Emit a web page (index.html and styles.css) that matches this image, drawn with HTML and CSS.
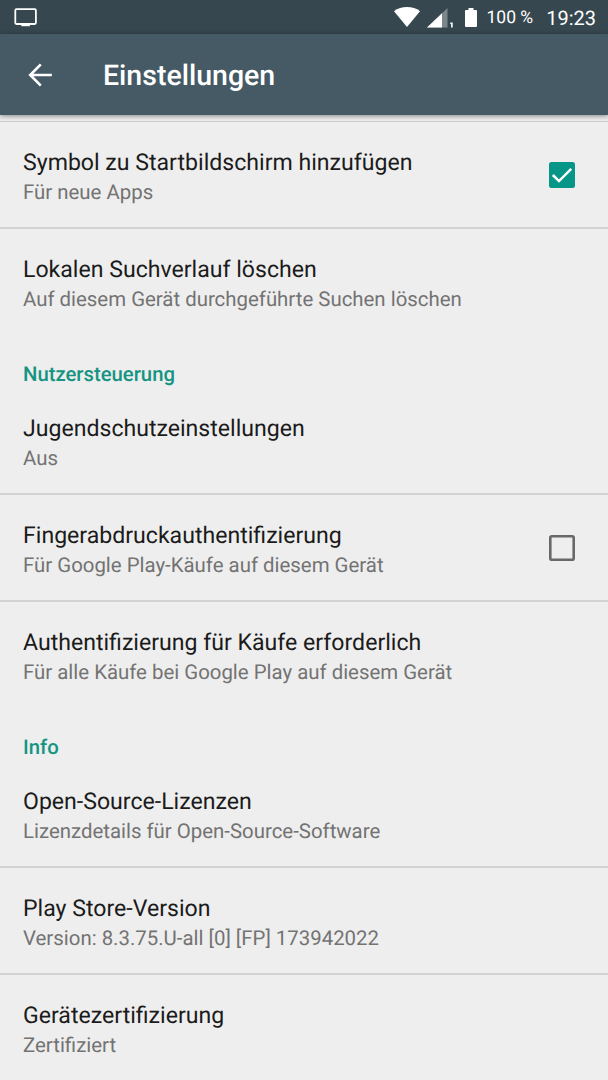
FILE: index.html
```
<!DOCTYPE html>
<html lang="de">
<head>
    <meta charset="UTF-8">
    <title>Einstellungen</title>
    <link rel="stylesheet" href="styles.css">
</head>
<body>
<div class="status_bar">
    <svg class="cast" width="24" height="20" viewBox="0 0 24 20">
        <rect x="1.3" y="1.2" width="20.6" height="14.8" rx="1.2" fill="none" stroke="#fff" stroke-width="1.8"/>
        <path d="M7.3 16h8.6v2.2H7.3z" fill="#fff"/>
    </svg>
    <div class="status_right">
        <svg class="wifi" width="26" height="20" viewBox="0 0 26 20">
            <path d="M0 4.2C7-1.4 19-1.4 26 4.2L13 20z" fill="#fff"/>
        </svg>
        <svg class="signal" width="27" height="20" viewBox="0 0 27 20">
            <path d="M20.5 0v19.5H0z" fill="#fff" opacity="0.35"/>
            <path d="M15 5.2v14.3H0z" fill="#fff"/>
            <path d="M23.3 14.4h2.4v5h-1.6v-3.4h-.8z" fill="#fff"/>
        </svg>
        <svg class="battery" width="12" height="19" viewBox="0 0 12 19">
            <path d="M3.5 0h5v2H11a1 1 0 0 1 1 1v15a1 1 0 0 1-1 1H1a1 1 0 0 1-1-1V3a1 1 0 0 1 1-1h2.5z" fill="#fff"/>
        </svg>
        <span class="percent">100 %</span>
        <span class="clock">19:23</span>
    </div>
</div>
<div class="toolbar">
    <svg class="back" width="24" height="24" viewBox="0 0 24 24">
        <path d="M12.8 1.4L2.2 12l10.6 10.6M2.4 12h21.4" fill="none" stroke="#fff" stroke-width="2.6"/>
    </svg>
    <h1>Einstellungen</h1>
</div>
<div class="settings">
    <div class="row">
        <div class="text">
            <p class="title">Symbol zu Startbildschirm hinzufügen</p>
            <p class="summary">Für neue Apps</p>
        </div>
        <svg class="checkbox" width="26" height="26" viewBox="0 0 26 26">
            <rect width="26" height="26" rx="2.5" fill="#069688"/>
            <path d="M3.8 13l6.2 6.1L22.2 6.8" fill="none" stroke="#fff" stroke-width="2.5"/>
        </svg>
    </div>
    <div class="row last">
        <div class="text">
            <p class="title">Lokalen Suchverlauf löschen</p>
            <p class="summary">Auf diesem Gerät durchgeführte Suchen löschen</p>
        </div>
    </div>

    <h2>Nutzersteuerung</h2>
    <div class="row">
        <div class="text">
            <p class="title">Jugendschutzeinstellungen</p>
            <p class="summary">Aus</p>
        </div>
    </div>
    <div class="row">
        <div class="text">
            <p class="title">Fingerabdruckauthentifizierung</p>
            <p class="summary">Für Google Play-Käufe auf diesem Gerät</p>
        </div>
        <svg class="checkbox" width="26" height="26" viewBox="0 0 26 26">
            <rect x="1.3" y="1.3" width="23.4" height="23.4" rx="1.5" fill="none" stroke="#686868" stroke-width="2.6"/>
        </svg>
    </div>
    <div class="row last">
        <div class="text">
            <p class="title">Authentifizierung für Käufe erforderlich</p>
            <p class="summary">Für alle Käufe bei Google Play auf diesem Gerät</p>
        </div>
    </div>

    <h2>Info</h2>
    <div class="row">
        <div class="text">
            <p class="title">Open-Source-Lizenzen</p>
            <p class="summary">Lizenzdetails für Open-Source-Software</p>
        </div>
    </div>
    <div class="row">
        <div class="text">
            <p class="title">Play Store-Version</p>
            <p class="summary">Version: 8.3.75.U-all [0] [FP] 173942022</p>
        </div>
    </div>
    <div class="row last">
        <div class="text">
            <p class="title">Gerätezertifizierung</p>
            <p class="summary">Zertifiziert</p>
        </div>
    </div>
</div>
</body>
</html>
```
FILE: styles.css
```
*{
  margin: 0;
  padding: 0;
  box-sizing: border-box;
}
body{
  height: 1080px;
  overflow: hidden;
  background: #eeeeee;
  font-family: Roboto, "Liberation Sans", sans-serif;
  text-rendering: geometricPrecision;
}
/* status bar */
.status_bar{
  display: flex;
  justify-content: space-between;
  height: 34px;
  padding: 0 12px 0 14px;
  background: #37474f;
  color: #fff;
}
.cast{
  margin-top: 8px;
}
.status_right{
  display: flex;
  align-items: flex-start;
}
.wifi{
  margin-top: 7px;
}
.signal{
  margin: 8px 0 0 7px;
}
.battery{
  margin: 8px 0 0 11px;
}
.percent{
  margin-left: 10px;
  font-size: 17.5px;
  line-height: 37px;
}
.clock{
  margin-left: 13px;
  font-size: 20px;
  line-height: 37px;
}
/* toolbar */
.toolbar{
  position: relative;
  display: flex;
  align-items: center;
  height: 81px;
  padding-left: 28px;
  background: #455a64;
  box-shadow: 0 1px 5px rgba(0,0,0,0.45);
}
.toolbar h1{
  margin: 3px 0 0 51px;
  font-size: 28.5px;
  font-weight: 500;
  line-height: 32px;
  color: #fff;
}
/* list */
.settings{
  margin-top: 6px;
  border-top: 1px solid #cfcfcb;
}
.row{
  display: flex;
  justify-content: space-between;
  height: 107px;
  padding: 26px 33px 0 23px;
  border-bottom: 2px solid #d2d2d2;
}
.row.last{
  border-bottom: none;
}
.title{
  font-size: 23.1px;
  line-height: 30px;
  color: #1b1b1b;
}
.summary{
  font-size: 20.4px;
  line-height: 29px;
  color: #737373;
}
.checkbox{
  margin-top: 14px;
}
h2{
  height: 52px;
  padding: 23px 0 0 23px;
  font-size: 20.3px;
  font-weight: 500;
  line-height: 30px;
  color: #159482;
}
```
